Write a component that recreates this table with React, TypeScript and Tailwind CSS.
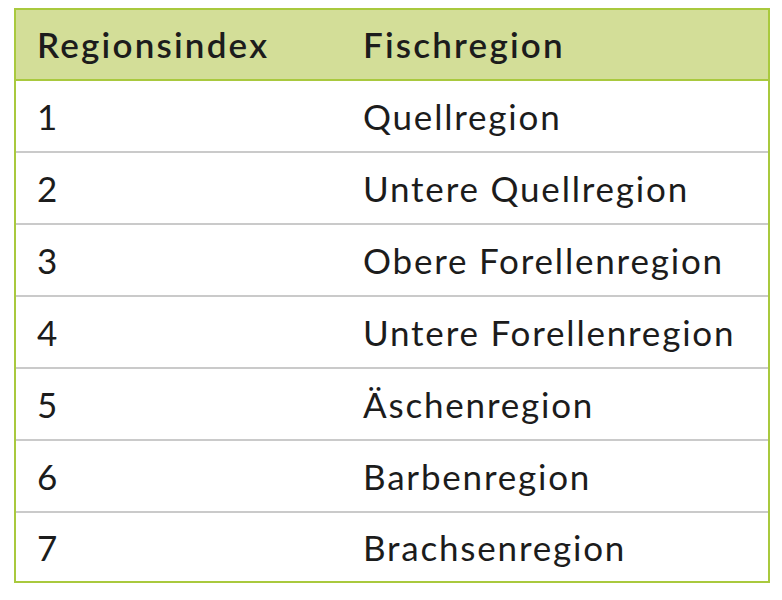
import React from "react";

const rows: [string, string][] = [
  ["1", "Quellregion"],
  ["2", "Untere Quellregion"],
  ["3", "Obere Forellenregion"],
  ["4", "Untere Forellenregion"],
  ["5", "Äschenregion"],
  ["6", "Barbenregion"],
  ["7", "Brachsenregion"],
];

export default function App() {
  return (
    <div className="w-[782px] h-[600px] bg-white pt-[8px] pl-[14px]" style={{ fontFamily: "Lato, 'Noto Sans', sans-serif" }}>
      <div className="w-[756px] border-2 border-[#a9c93e] text-[#1c1c1c]">
        <div className="grid grid-cols-[326px_1fr] h-[71px] bg-[#d3de98] border-b-2 border-[#a9c93e] items-center font-semibold text-[35px] tracking-[2.2px]">
          <div className="pl-[21px]">Regionsindex</div>
          <div className="pl-[21px]">Fischregion</div>
        </div>
        {rows.map(([a, b], i) => (
          <div
            key={a}
            className={
              "grid grid-cols-[326px_1fr] items-center text-[35px] tracking-[1.8px] " +
              (i < rows.length - 1 ? "h-[72px] border-b-2 border-[#cacaca]" : "h-[68px]")
            }
          >
            <div className="pl-[21px]">{a}</div>
            <div className="pl-[21px]">{b}</div>
          </div>
        ))}
      </div>
    </div>
  );
}
